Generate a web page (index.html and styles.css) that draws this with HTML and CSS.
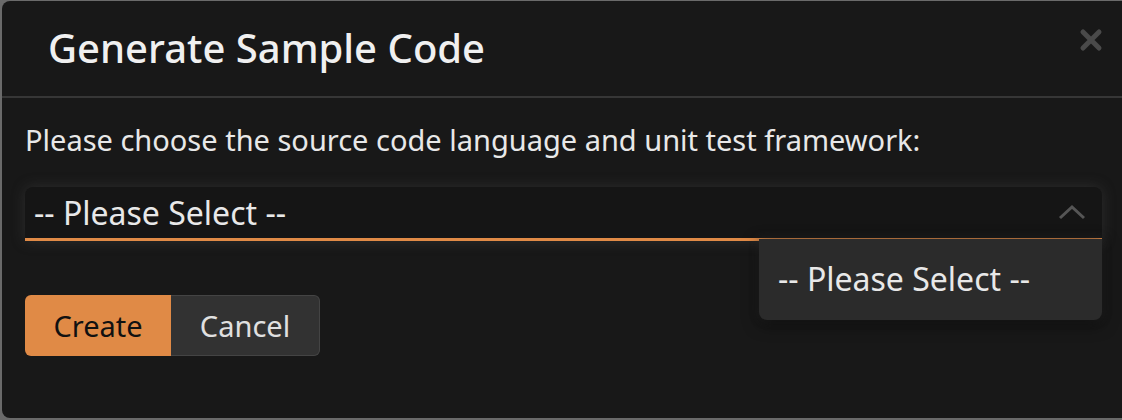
FILE: index.html
```html
<!DOCTYPE html>
<html lang="en">
<head>
    <meta charset="UTF-8">
    <title>Generate Sample Code</title>
    <link rel="stylesheet" href="styles.css">
</head>
<body>
<div class="dialog">
    <!-- ヘッダー -->
    <div class="dialog-header">
        <h2>Generate Sample Code</h2>
        <svg class="close-btn" width="24" height="24" viewBox="0 0 24 24">
            <path d="M4 4 L20 20 M20 4 L4 20" stroke="#4a4a4a" stroke-width="5" stroke-linecap="round"/>
        </svg>
    </div>

    <div class="dialog-body">
        <p class="hint">Please choose the source code language and unit test framework:</p>

        <div class="select-wrap">
            <div class="select-box">
                <span>-- Please Select --</span>
                <svg class="chevron" width="28" height="16" viewBox="0 0 28 16">
                    <path d="M2 14 L14 3 L26 14" fill="none" stroke="#555" stroke-width="3"/>
                </svg>
            </div>
            <div class="select-menu">
                <div class="select-option">-- Please Select --</div>
            </div>
        </div>

        <div class="btn-group">
            <button class="btn btn-create">Create</button>
            <button class="btn btn-cancel">Cancel</button>
        </div>
    </div>
</div>
</body>
</html>
```

FILE: styles.css
```css
body {
    margin: 0;
    background-color: #6a6a6a;
    font-family: "Noto Sans", "Open Sans", sans-serif;
    overflow: hidden;
}

/* ダイアログ本体 */
.dialog {
    margin: 1px -10px 2px 2px;
    height: 417px;
    background-color: #181818;
    border-radius: 8px;
    color: #e8e8e8;
}

.dialog-header {
    display: flex;
    justify-content: space-between;
    align-items: center;
    height: 95px;
    border-bottom: 2px solid #363636;
    padding: 0 29px 0 46px;
}

.dialog-header h2 {
    margin: 0;
    font-size: 40px;
    font-weight: 500;
    color: #f0f0f0;
    padding-bottom: 2px;
}

.close-btn {
    margin-top: -18px;
}

.dialog-body {
    padding: 22px 18px 0 23px;
}

.hint {
    margin: 0 0 28px 0;
    font-size: 29px;
}

/* セレクトボックス */
.select-wrap {
    position: relative;
    width: 1077px;
}

.select-box {
    display: flex;
    justify-content: space-between;
    align-items: center;
    height: 51px;
    padding: 0 16px 0 9px;
    background-color: #151515;
    border-radius: 8px 8px 0 0;
    border-bottom: 3px solid #e08a46;
    box-shadow: 0 0 14px rgba(70, 70, 70, 0.45);
    font-size: 32px;
}

.chevron {
    margin-bottom: 2px;
}

.select-menu {
    position: absolute;
    top: 52px;
    right: 0;
    width: 343px;
    background-color: #2b2b2b;
    border-radius: 0 0 8px 8px;
    box-shadow: 0 4px 16px rgba(0, 0, 0, 0.6), 0 0 10px rgba(80, 80, 80, 0.35);
}

.select-option {
    padding: 18px 19px 20px;
    font-size: 32px;
}

/* ボタン */
.btn-group {
    display: flex;
    margin-top: 54px;
}

.btn {
    height: 61px;
    font-family: inherit;
    font-size: 29px;
    cursor: pointer;
}

.btn-create {
    width: 146px;
    background-color: #e08a46;
    color: #111;
    border: none;
    border-radius: 6px 0 0 6px;
}

.btn-cancel {
    width: 149px;
    background-color: #323232;
    color: #e0e0e0;
    border: 1px solid #444;
    border-left: none;
    border-radius: 0 6px 6px 0;
}
```
